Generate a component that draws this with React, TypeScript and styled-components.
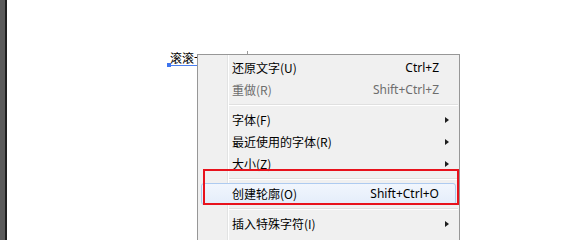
import React from "react";
import styled, { createGlobalStyle } from "styled-components";

const Global = createGlobalStyle`
  html, body { margin: 0; padding: 0; background: #ffffff; overflow: hidden; }
  body { font-family: "Noto Sans", "Noto Sans CJK SC", sans-serif; }
`;

const Page = styled.div`
  display: flex;
  width: 570px;
  height: 240px;
  overflow: hidden;
`;

const SideBar = styled.div`
  width: 5px;
  background: #5a5a5a;
  border-right: 2px solid #1f1f1f;
  flex: none;
`;

const Canvas = styled.div`
  position: relative;
  flex: 1;
  background: #ffffff;
  overflow: hidden;
`;

const TextFrame = styled.div`
  position: absolute;
  left: 161px;
  top: 51px;
  width: 40px;
  font-family: "Noto Sans CJK SC", sans-serif;
  font-size: 12px;
  line-height: 14px;
  color: #000;
  padding-left: 2px;
  border-bottom: 1px solid #4a7ff0;
  white-space: nowrap;
`;

const Anchor = styled.span`
  position: absolute;
  left: -1px;
  bottom: -2px;
  width: 4px;
  height: 4px;
  background: #3d74ee;
`;

const Caret = styled.span`
  position: absolute;
  left: 240px;
  top: 51px;
  width: 1px;
  height: 3px;
  background: #9a9a9a;
`;

const Menu = styled.div`
  position: absolute;
  left: 190px;
  top: 54px;
  width: 263px;
  min-height: 210px;
  box-sizing: border-box;
  background: #f0f0f0;
  border: 1px solid #979797;
  padding: 2px 0 0;
  display: flex;
  flex-direction: column;
  font-size: 12px;

  &::before {
    content: "";
    position: absolute;
    left: 29px;
    top: 0;
    bottom: 0;
    width: 1px;
    background: #e2e3e3;
    box-shadow: 1px 0 0 #ffffff;
  }
`;

const Item = styled.div<{ $active?: boolean; $disabled?: boolean }>`
  position: relative;
  display: grid;
  grid-template-columns: 1fr auto 16px;
  align-items: center;
  height: 22px;
  margin: 0 3px;
  padding-left: 30px;
  box-sizing: border-box;
  color: ${(p) => (p.$disabled ? "#6d6d6d" : "#000000")};
  border: 1px solid ${(p) => (p.$active ? "#aecbf0" : "transparent")};
  border-radius: 3px;
  background: ${(p) =>
    p.$active ? "linear-gradient(#f1f6fd, #e4edfa)" : "transparent"};
`;

const Label = styled.span`
  font-family: "Noto Sans CJK SC", sans-serif;
  line-height: 16px;
  white-space: nowrap;
`;

const Shortcut = styled.span`
  font-family: "Noto Sans", "Noto Sans CJK SC", sans-serif;
  line-height: 16px;
  white-space: nowrap;
`;

const ArrowCell = styled.span`
  display: flex;
  justify-content: flex-end;
  padding-right: 6px;
`;

const Arrow = styled.span`
  width: 0;
  height: 0;
  border-left: 4px solid #1e1e1e;
  border-top: 3.5px solid transparent;
  border-bottom: 3.5px solid transparent;
`;

const Separator = styled.div`
  height: 8px;
  margin-left: 31px;
  margin-right: 1px;
  display: flex;
  flex-direction: column;
  justify-content: center;

  &::before {
    content: "";
    height: 1px;
    background: #e0e0e0;
  }
  &::after {
    content: "";
    height: 1px;
    background: #ffffff;
  }
`;

const Highlight = styled.div`
  position: absolute;
  left: 196px;
  top: 169px;
  width: 256px;
  height: 36px;
  box-sizing: border-box;
  border: 2px solid #e8121c;
  pointer-events: none;
`;

type Entry =
  | { kind: "item"; label: string; shortcut?: string; sub?: boolean; disabled?: boolean; active?: boolean }
  | { kind: "sep" };

const entries: Entry[] = [
  { kind: "item", label: "还原文字(U)", shortcut: "Ctrl+Z" },
  { kind: "item", label: "重做(R)", shortcut: "Shift+Ctrl+Z", disabled: true },
  { kind: "sep" },
  { kind: "item", label: "字体(F)", sub: true },
  { kind: "item", label: "最近使用的字体(R)", sub: true },
  { kind: "item", label: "大小(Z)", sub: true },
  { kind: "sep" },
  { kind: "item", label: "创建轮廓(O)", shortcut: "Shift+Ctrl+O", active: true },
  { kind: "sep" },
  { kind: "item", label: "插入特殊字符(I)", sub: true },
];

export default function App() {
  return (
    <>
      <Global />
      <Page>
        <SideBar />
        <Canvas>
          <TextFrame>
            滚滚一
            <Anchor />
          </TextFrame>
          <Caret />
          <Menu>
            {entries.map((e, i) =>
              e.kind === "sep" ? (
                <Separator key={i} />
              ) : (
                <Item key={i} $active={e.active} $disabled={e.disabled}>
                  <Label>{e.label}</Label>
                  <Shortcut>{e.shortcut ?? ""}</Shortcut>
                  <ArrowCell>{e.sub ? <Arrow /> : null}</ArrowCell>
                </Item>
              )
            )}
          </Menu>
          <Highlight />
        </Canvas>
      </Page>
    </>
  );
}
